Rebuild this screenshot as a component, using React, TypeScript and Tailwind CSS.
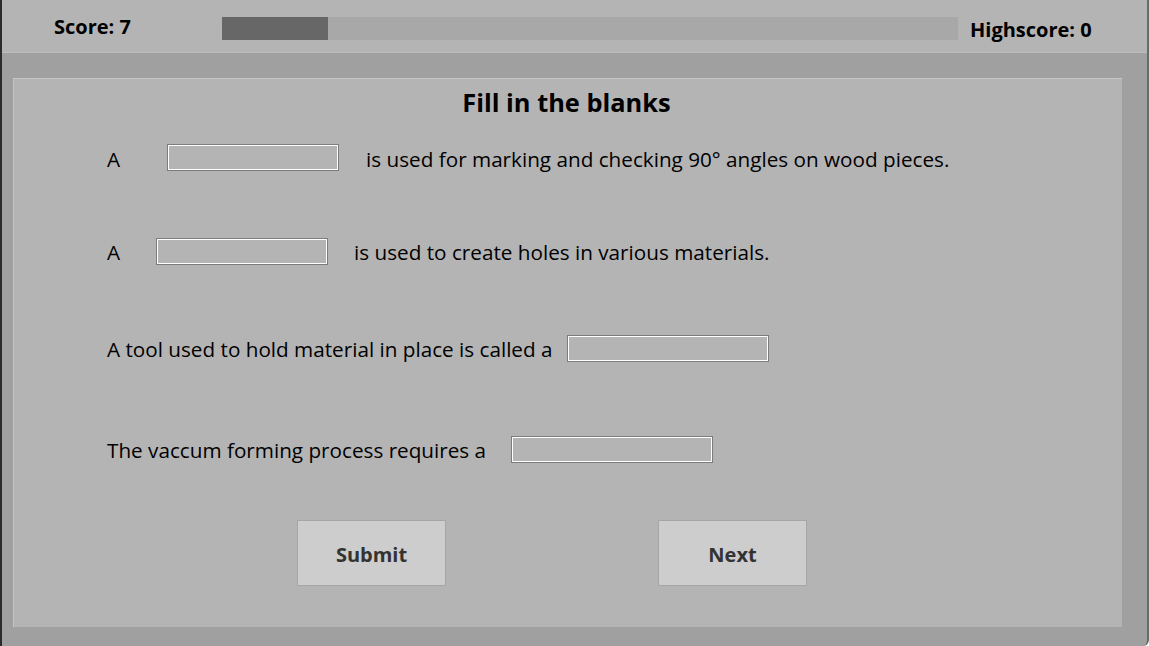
const font = "font-['Segoe_UI','Open_Sans','Noto_Sans',sans-serif]";

const Blank = ({ width }: { width: string }) => (
  <div className={`h-[27px] ${width} border border-[#7c7c7c] bg-[#b4b4b4] shadow-[inset_0_0_0_1px_#ffffff]`} />
);

export default function App() {
  const score = 7;
  const progress = 14.4;
  return (
    <div className={`h-[646px] w-full overflow-hidden bg-[#a0a0a0] border-l-2 border-[#2b2b2b] border-r-2 border-r-[#6a6a6a] rounded-br-[6px] ${font}`}>
      {/* top bar */}
      <div className="flex h-[53px] items-start border-b border-[#bcbcbc] bg-[#b4b4b4]">
        <div className="ml-[52px] mt-[13px] w-[168px] text-[20px] font-bold leading-[28px] text-black">Score: {score}</div>
        <div className="mt-[17px] h-[23px] w-[736px] bg-[#a8a8a8]">
          <div className="h-full bg-[#676767]" style={{ width: `${progress}%` }} />
        </div>
        <div className="ml-[12px] mt-[16px] text-[20px] font-bold leading-[28px] text-black">Highscore: 0</div>
      </div>

      {/* card */}
      <div className="pl-[11px] pt-[25px]">
        <div className="flex h-[549px] w-[1109px] flex-col border-l border-t border-[#c4c4c4] bg-[#b4b4b4] pl-[93px] text-[20.7px] text-black">
          <h1 className="mt-[5px] h-[36px] pr-[96px] text-center text-[25.4px] font-bold leading-[36px]">Fill in the blanks</h1>

          <div className="mt-[24px] flex h-[27px] items-center">
            <span className="mt-[5px]">A</span>
            <div className="ml-[47px]"><Blank width="w-[172px]" /></div>
            <span className="ml-[27px] mt-[5px]">is used for marking and checking 90° angles on wood pieces.</span>
          </div>

          <div className="mt-[67px] flex h-[27px] items-center">
            <span className="mt-[2px]">A</span>
            <div className="ml-[36px]"><Blank width="w-[172px]" /></div>
            <span className="ml-[26px] mt-[2px]">is used to create holes in various materials.</span>
          </div>

          <div className="mt-[70px] flex h-[27px] items-center">
            <span className="mt-[2px]">A tool used to hold material in place is called a</span>
            <div className="ml-[14px]"><Blank width="w-[202px]" /></div>
          </div>

          <div className="mt-[74px] flex h-[27px] items-center">
            <span className="mt-[3px]">The vaccum forming process requires a</span>
            <div className="ml-[25px]"><Blank width="w-[202px]" /></div>
          </div>

          <div className="mt-[57px] flex">
            <button className="ml-[190px] h-[66px] w-[149px] border border-[#a6a6a6] bg-[#cdcdcd] pt-[3px] text-[20px] font-bold text-[#333333]">Submit</button>
            <button className="ml-[212px] h-[66px] w-[149px] border border-[#a6a6a6] bg-[#cdcdcd] pt-[3px] text-[20px] font-bold text-[#333333]">Next</button>
          </div>
        </div>
      </div>
    </div>
  );
}
